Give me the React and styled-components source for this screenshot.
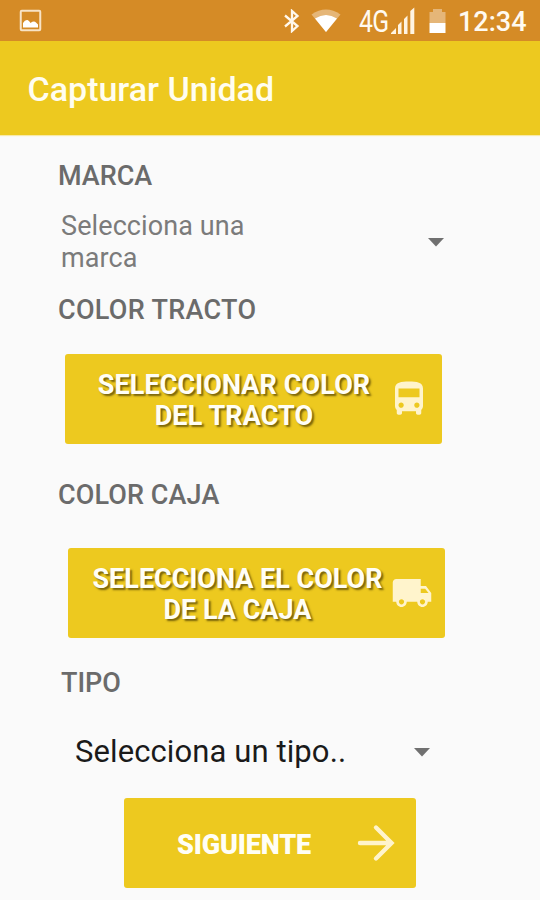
import React from "react";
import styled, { createGlobalStyle } from "styled-components";

const GlobalStyle = createGlobalStyle`
  * { box-sizing: border-box; }
  body { margin: 0; background: #fafafa; font-family: Roboto, "Liberation Sans", sans-serif; }
`;

const Screen = styled.div`
  width: 540px;
  height: 900px;
  overflow: hidden;
  display: flex;
  flex-direction: column;
  background: #fafafa;
`;

const StatusBar = styled.header`
  height: 41px;
  flex: none;
  display: flex;
  align-items: center;
  padding: 0 13px 0 19px;
  background: #d58b26;
  color: #fffaf0;
`;

const StatusIcons = styled.div`
  margin-left: auto;
  display: flex;
  align-items: center;
`;

const Glyph = styled.svg`
  display: block;
  flex: none;
  margin-left: ${(p) => p.$gap || 0}px;
`;

const Network = styled.span`
  width: 29px;
  margin-left: 18px;
  font-size: 31px;
  line-height: 41px;
  letter-spacing: -1px;
  white-space: nowrap;
  display: block;
  transform: scaleX(0.8);
  transform-origin: left center;
  padding-top: 2px;
`;

const Clock = styled.span`
  width: 69px;
  margin-left: 12px;
  font-size: 27px;
  font-weight: 500;
  line-height: 41px;
  padding-top: 3px;
  white-space: nowrap;
`;

const AppBar = styled.div`
  height: 94px;
  flex: none;
  display: flex;
  align-items: center;
  padding: 2px 0 0 27.5px;
  background: #edc91f;
  box-shadow: 0 1px 1px #f7e9a8;
`;

const Title = styled.h1`
  margin: 0;
  font-size: 34px;
  font-weight: 500;
  line-height: 40px;
  color: #fffdf0;
  white-space: nowrap;
`;

const Form = styled.main`
  flex: 1;
  display: flex;
  flex-direction: column;
  align-items: flex-start;
  padding: 25px 0 0 58px;
`;

const Label = styled.label`
  font-size: 27px;
  font-weight: 500;
  line-height: 32px;
  letter-spacing: ${(p) => p.$track || 0}px;
  margin-top: ${(p) => p.$gap || 0}px;
  margin-left: ${(p) => p.$indent || 0}px;
  color: #6b6b6b;
  white-space: nowrap;
`;

const Select = styled.div`
  display: flex;
  align-items: center;
  justify-content: space-between;
  width: ${(p) => p.$width}px;
  margin: ${(p) => p.$margin};
  color: ${(p) => p.$color};
  font-size: ${(p) => p.$size}px;
  line-height: ${(p) => p.$line}px;
  letter-spacing: 0.1px;
  white-space: nowrap;
`;

const Button = styled.button`
  display: flex;
  align-items: center;
  width: ${(p) => p.$width}px;
  height: 90px;
  flex: none;
  margin: ${(p) => p.$margin};
  padding: ${(p) => p.$padding};
  border: 0;
  border-radius: 3px;
  background: #edc91f;
  font-family: inherit;
  color: #fffef6;
`;

const ButtonText = styled.span`
  flex: none;
  width: ${(p) => p.$width}px;
  padding-top: ${(p) => p.$drop}px;
  font-size: 27px;
  font-weight: ${(p) => p.$weight || 700};
  line-height: 31px;
  letter-spacing: ${(p) => p.$track || 0}px;
  text-align: center;
  white-space: nowrap;
  text-shadow: ${(p) => (p.$shadow ? "2px 2px 2px rgba(70, 55, 0, 0.7)" : "none")};
`;

const Caret = () => (
  <Glyph width="16" height="9" viewBox="0 0 16 9">
    <path d="M0 0H16L8 8.5Z" fill="#707070" />
  </Glyph>
);

const BUS =
  "M4 16c0 .88.39 1.67 1 2.22V20c0 .55.45 1 1 1h1c.55 0 1-.45 1-1v-1h8v1c0 .55.45 1 1 1h1c.55 0 1-.45 1-1v-1.78c.61-.55 1-1.34 1-2.22V6c0-3.5-3.58-4-8-4s-8 .5-8 4v10zm3.5 1c-.83 0-1.5-.67-1.5-1.5S6.67 14 7.5 14s1.5.67 1.5 1.5S8.33 17 7.5 17zm9 0c-.83 0-1.5-.67-1.5-1.5s.67-1.5 1.5-1.5 1.5.67 1.5 1.5-.67 1.5-1.5 1.5zm1.5-6H6V6h12v5z";
const TRUCK =
  "M20 8h-3V4H3c-1.1 0-2 .9-2 2v11h2c0 1.66 1.34 3 3 3s3-1.34 3-3h6c0 1.66 1.34 3 3 3s3-1.34 3-3h2v-5l-3-4zM6 18.5c-.83 0-1.5-.67-1.5-1.5s.67-1.5 1.5-1.5 1.5.67 1.5 1.5-.67 1.5-1.5 1.5zm13.5-9l1.96 2.5H17V9.5h2.5zm-1.5 9c-.83 0-1.5-.67-1.5-1.5s.67-1.5 1.5-1.5 1.5.67 1.5 1.5-.67 1.5-1.5 1.5z";

export default function App() {
  return (
    <>
      <GlobalStyle />
      <Screen>
        <StatusBar>
          <Glyph width="23" height="23" viewBox="0 0 23 23">
            <rect x="1.75" y="1.75" width="19.5" height="19.5" rx="1" fill="none" stroke="#f8e3c5" strokeWidth="2" />
            <path d="M4 18.5V14Q6 10.5 8.5 11Q10 11.5 11.5 14Q15 11.5 17 13.5L19 15.5V18.5Z" fill="#fff" />
          </Glyph>
          <StatusIcons>
            <Glyph width="16" height="24" viewBox="0 0 16 24">
              <path d="M1 6.5L13.5 17L8 22V2L13.5 7L1 17.5" fill="none" stroke="#fff8ec" strokeWidth="2.3" />
            </Glyph>
            <Glyph $gap={11} width="30" height="24" viewBox="0 0 30 24">
              <path d="M0.5 5.5Q15-4.5 29.5 5.5L15 23Z" fill="#e5b678" />
              <path d="M4 9.5Q15 2.5 26 9.5L15 23Z" fill="#fff" />
            </Glyph>
            <Network>4G</Network>
            <Glyph $gap={3} width="24" height="28" viewBox="0 0 24 28">
              <path d="M0 27V26L5 21V27ZM7 27V18L10.5 14.5V27ZM13 27V12L16.5 8.5V27ZM19.3 27V4L23.3 0.5V27Z" fill="#fff4e2" />
            </Glyph>
            <Glyph $gap={14} width="17" height="24" viewBox="0 0 17 24">
              <path d="M0.5 3H4V0H13V3H16.5V14H0.5Z" fill="#e5b678" />
              <path d="M0.5 14H16.5V24H0.5Z" fill="#fff" />
            </Glyph>
            <Clock>12:34</Clock>
          </StatusIcons>
        </StatusBar>
        <AppBar>
          <Title>Capturar Unidad</Title>
        </AppBar>
        <Form>
          <Label>MARCA</Label>
          <Select $width={383} $margin="19px 0 0 3px" $color="#7b7b7b" $size={27} $line={31.5}>
            <span>Selecciona una<br />marca</span>
            <Caret />
          </Select>
          <Label $gap={20} $track={0.3}>COLOR TRACTO</Label>
          <Button $width={377} $margin="28px 0 0 7px" $padding="0 0 0 22px">
            <ButtonText $width={294} $drop={3} $track={0.1} $shadow>SELECCIONAR COLOR<br />DEL TRACTO</ButtonText>
            <Glyph $gap={7} width="42" height="42" viewBox="0 0 24 24"><path d={BUS} fill="#fff4cc" /></Glyph>
          </Button>
          <Label $gap={35} $track={0.1}>COLOR CAJA</Label>
          <Button $width={377} $margin="37px 0 0 10px" $padding="0">
            <ButtonText $width={339} $drop={3} $track={0} $shadow>SELECCIONA EL COLOR<br />DE LA CAJA</ButtonText>
            <Glyph $gap={-16} width="42" height="42" viewBox="0 0 24 24"><path d={TRUCK} fill="#fff4cc" /></Glyph>
          </Button>
          <Label $gap={29} $indent={3}>TIPO</Label>
          <Select $width={355} $margin="34px 0 0 17px" $color="#1a1a1a" $size={31} $line={38}>
            <span>Selecciona un tipo..</span>
            <Caret />
          </Select>
          <Button $width={292} $margin="27px 0 0 66px" $padding="0 0 0 40px">
            <ButtonText $width={160} $weight={900} $drop={4} $track={-0.15}>SIGUIENTE</ButtonText>
            <Glyph $gap={33} width="38" height="38" viewBox="0 0 38 38">
              <path d="M3 19H34M19 3.5L34.5 19L19 34.5" fill="none" stroke="#fff4cc" strokeWidth="4.4" strokeLinecap="round" />
            </Glyph>
          </Button>
        </Form>
      </Screen>
    </>
  );
}
